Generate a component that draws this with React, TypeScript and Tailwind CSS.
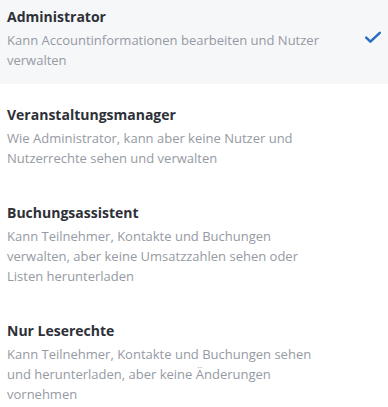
import React from "react";

type Role = {
  title: string;
  description: string;
  selected?: boolean;
};

const roles: Role[] = [
  {
    title: "Administrator",
    description: "Kann Accountinformationen bearbeiten und Nutzer verwalten",
    selected: true
  },
  {
    title: "Veranstaltungsmanager",
    description: "Wie Administrator, kann aber keine Nutzer und Nutzerrechte sehen und verwalten"
  },
  {
    title: "Buchungsassistent",
    description:
      "Kann Teilnehmer, Kontakte und Buchungen verwalten, aber keine Umsatzzahlen sehen oder Listen herunterladen"
  },
  {
    title: "Nur Leserechte",
    description:
      "Kann Teilnehmer, Kontakte und Buchungen sehen und herunterladen, aber keine Änderungen vornehmen"
  }
];

function CheckIcon() {
  return (
    <svg width="18" height="13" viewBox="0 0 18 13" fill="none" className="text-[#2a6cc4]">
      <path d="M2.2 6.6 L6.4 10.6 L15.8 1.8" stroke="currentColor" strokeWidth="2.5" strokeLinecap="round" strokeLinejoin="round" />
    </svg>
  );
}

export default function App() {
  return (
    <div className="flex h-[407px] w-[388px] flex-col gap-[14px] overflow-hidden bg-white font-['Open_Sans',sans-serif]">
      {roles.map((role) => (
        <div
          key={role.title}
          className={`flex items-center pb-[14px] pl-[7px] pr-[6px] pt-[7px] ${role.selected ? "bg-[#f6f7f9]" : ""}`}
        >
          <div className="w-[326px] shrink-0">
            <div className="text-[14px] font-bold leading-[20px] text-[#2e3038]">{role.title}</div>
            <p className="mt-[3px] text-[13px] leading-[20px] text-[#959aa3]">{role.description}</p>
          </div>
          <div className="flex flex-1 justify-end pb-[3px]">
            {role.selected ? <CheckIcon /> : null}
          </div>
        </div>
      ))}
    </div>
  );
}
